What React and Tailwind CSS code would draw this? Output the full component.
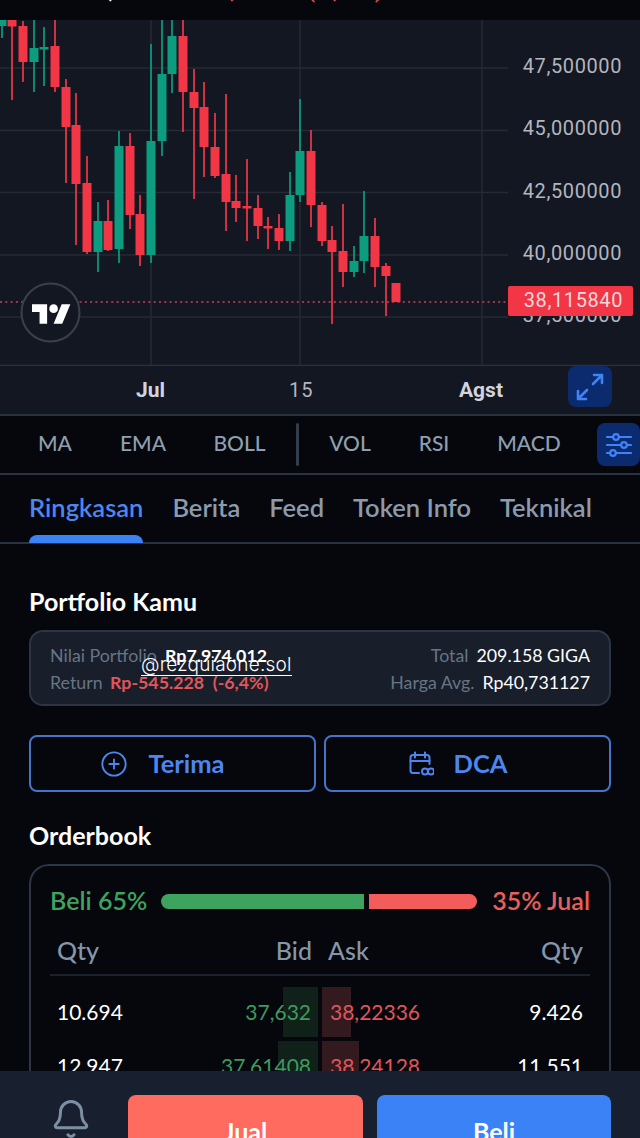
import React from "react";
import { Bell, CirclePlus } from "lucide-react";

// [x, bodyTop, bodyBottom, wickTop, wickBottom, up]
const candles = [
  [2, 20, 26, 20, 38, 1],
  [12, 20, 26.5, 20, 100, 0],
  [23, 26, 62, 21, 82, 0],
  [34, 48, 62, 20, 92, 1],
  [44, 47, 49, 27, 86, 1],
  [55, 46, 87, 20, 92, 0],
  [66, 87, 127, 79, 183, 0],
  [76, 125, 184, 93, 245, 0],
  [87, 183, 252, 156, 254, 0],
  [98, 221, 252, 202, 272, 1],
  [108, 221, 250, 200, 251, 0],
  [119, 146, 249, 131, 263, 1],
  [130, 146, 215, 133, 229, 0],
  [140, 214, 255, 195, 266, 0],
  [151, 141, 255, 44, 263, 1],
  [162, 74, 141, 20, 156, 1],
  [172, 36, 74, 20, 93, 1],
  [183, 36, 92, 20, 132, 0],
  [194, 92, 108, 69, 199, 0],
  [204, 107, 147, 82, 177, 0],
  [215, 147, 176, 113, 178, 0],
  [226, 174, 202, 94, 231, 0],
  [236, 201, 208, 175, 222, 0],
  [247, 206, 207, 159, 241, 0],
  [258, 208, 226, 195, 239, 0],
  [268, 226, 228, 217, 249, 0],
  [279, 228, 241, 214, 250, 0],
  [290, 195, 241, 172, 251, 1],
  [300, 151, 195, 99, 202, 1],
  [311, 151, 205, 130, 227, 0],
  [322, 205, 241, 202, 246, 0],
  [332, 240, 252, 226, 324, 0],
  [343, 251, 272, 204, 287, 0],
  [354, 261, 272, 246, 277, 1],
  [364, 236, 261, 191, 273, 1],
  [375, 236, 267, 218, 287, 0],
  [386, 266, 276, 263, 316, 0],
  [396, 283, 302, 283, 302, 0],
];

const gridRows = [68, 130.5, 192.5, 255, 317];
const gridCols = [151, 300, 482];

const priceLabels = [
  { text: "47,500000", cls: "top-[34px]" },
  { text: "45,000000", cls: "top-[96px]" },
  { text: "42,500000", cls: "top-[159px]" },
  { text: "40,000000", cls: "top-[221px]" },
  { text: "37,500000", cls: "top-[283px]" },
];

const indicatorsLeft = [
  { text: "MA", cls: "w-[33px] ml-[38px]" },
  { text: "EMA", cls: "w-[46px] ml-[49px]" },
  { text: "BOLL", cls: "w-[53px] ml-[47px]" },
];
const indicatorsRight = [
  { text: "VOL", cls: "w-[42px] ml-[30px]" },
  { text: "RSI", cls: "w-[32px] ml-[47px]" },
  { text: "MACD", cls: "w-[64px] ml-[47px]" },
];

const tabs = ["Ringkasan", "Berita", "Feed", "Token Info", "Teknikal"];

const orders = [
  {
    qty: "10.694",
    bid: "37,632",
    ask: "38,22336",
    qty2: "9.426",
    bidBar: "w-[35px]",
    askBar: "w-[29px]",
  },
  {
    qty: "12.947",
    bid: "37,61408",
    ask: "38,24128",
    qty2: "11.551",
    bidBar: "w-[40px]",
    askBar: "w-[37px]",
  },
];

const CandleChart = () => (
  <svg width="640" height="346" viewBox="0 20 640 346" className="block">
    {gridRows.map((y) => (
      <line key={y} x1="0" x2="508" y1={y} y2={y} stroke="#252a35" strokeWidth="1.5" />
    ))}
    {gridCols.map((x) => (
      <line key={x} x1={x} x2={x} y1="20" y2="365" stroke="#252a35" strokeWidth="1.5" />
    ))}
    <line x1="0" x2="508" y1="302" y2="302" stroke="#d2405a" strokeWidth="1.5" strokeDasharray="2 3.3" />
    {candles.map(([x, top, bottom, wickTop, wickBottom, up]) => (
      <g key={x} fill={up ? "#0c9c80" : "#f23645"} stroke="none">
        <rect x={x - 1} y={wickTop} width="2" height={wickBottom - wickTop} opacity="0.85" />
        <rect x={x - 4.5} y={top} width="9" height={Math.max(bottom - top, 2.5)} />
      </g>
    ))}
    <circle cx="50.5" cy="312.5" r="29" fill="#131722" stroke="#3c404b" strokeWidth="2" />
    <g transform="translate(32 300) scale(1.08)" fill="#fff">
      <path d="M14 22H7V11H0V4h14v18zM28 22h-8l7.5-18h8L28 22z" />
      <circle cx="20" cy="8" r="4" />
    </g>
    <line x1="0" x2="640" y1="365.5" y2="365.5" stroke="#2a303c" strokeWidth="1.5" />
  </svg>
);

const CalendarInfinity = () => (
  <svg width="26" height="26" viewBox="0 0 26 26" fill="none" stroke="currentColor" strokeWidth="2" strokeLinecap="round" strokeLinejoin="round">
    <path d="M11 22H5a2.5 2.5 0 0 1-2.5-2.5V6.5A2.5 2.5 0 0 1 5 4h14a2.5 2.5 0 0 1 2.5 2.5V13" />
    <path d="M7 1.5v5M17 1.5v5M2.5 10h19" />
    <circle cx="17" cy="20.5" r="3" />
    <circle cx="23" cy="20.5" r="3" />
  </svg>
);

const App = () => {
  return (
    <div className="flex flex-col h-[1138px] w-[640px] overflow-hidden bg-[#05070d] font-[family-name:Lato]">
      <main className="flex-1 min-h-0 overflow-hidden">
        <div className="h-5 overflow-hidden flex items-end pl-[86px] pb-[19px] font-[family-name:Roboto] text-xl leading-none font-medium">
          <span className="text-white shrink-0 w-[133px] whitespace-nowrap">38,11584 ↑</span>
          <span className="text-[#e2555a] shrink-0 whitespace-nowrap">6,684665 (-1,66%)</span>
        </div>

        <div className="relative h-[346px] bg-[#131722] font-[family-name:Roboto]">
          <CandleChart />
          {priceLabels.map((label) => (
            <span
              key={label.text}
              className={`absolute right-[18px] text-[20px] leading-6 tracking-[0.6px] text-[#b2b5be] ${label.cls}`}
            >
              {label.text}
            </span>
          ))}
          <span className="absolute left-[508px] top-[266px] w-[125px] h-[30px] rounded-[2px] bg-[#f23645] text-[#f3d9dc] text-[20px] leading-[29px] tracking-[0.6px] text-right pr-[10px]">
            38,115840
          </span>
        </div>

        <div className="relative flex items-start h-[50px] bg-[#131722] border-b-2 border-[#2a3140] font-[family-name:Roboto] text-[21px] text-[#d1d4dc]">
          <span className="absolute left-[136px] top-[12px] font-bold leading-6">Jul</span>
          <span className="absolute left-[289px] top-[12px] text-[20px] font-normal leading-6 tracking-[1px] text-[#b2b5be]">15</span>
          <span className="absolute left-[459px] top-[12px] font-bold leading-6">Agst</span>
          <button className="ml-[568px] w-[44px] h-[41px] rounded-lg bg-[#0c2a6e] flex items-center justify-center text-[#3f83f8]">
            <svg width="30" height="30" viewBox="0 0 30 30" fill="none" stroke="currentColor" strokeWidth="2.6" strokeLinecap="round" strokeLinejoin="round">
              <path d="M18 12l9-9M19 3h8v8M12 18l-9 9M3 19v8h8" />
            </svg>
          </button>
        </div>

        <div className="flex items-center h-[59px] border-b-2 border-[#2a3140] text-[21px] font-medium text-[#8f9faf]">
          {indicatorsLeft.map((item) => (
            <span key={item.text} className={`mb-[3px] text-center ${item.cls}`}>
              {item.text}
            </span>
          ))}
          <span className="ml-[30px] w-[3px] h-[43px] rounded-sm bg-[#333d4c]" />
          {indicatorsRight.map((item) => (
            <span key={item.text} className={`mb-[3px] text-center ${item.cls}`}>
              {item.text}
            </span>
          ))}
          <button className="ml-auto w-[43px] h-[43px] rounded-lg bg-[#0c2a6e] flex items-center justify-center text-[#3f83f8]">
            <svg width="28" height="28" viewBox="0 0 28 28" fill="none" stroke="currentColor" strokeWidth="2.2" strokeLinecap="round">
              <path d="M2 6h6M14 6h12M2 14h14M22 14h4M2 22h3M11 22h15" />
              <circle cx="11" cy="6" r="2.8" />
              <circle cx="19" cy="14" r="2.8" />
              <circle cx="8" cy="22" r="2.8" />
            </svg>
          </button>
        </div>

        <div className="flex gap-[29px] h-[69px] pl-[29px] border-b-2 border-[#2a3140] text-[25.5px] font-semibold text-[#8c9bab]">
          {tabs.map((tab, idx) => (
            <div key={tab} className="relative flex items-start pt-[13px] h-[68px]">
              <span className={idx === 0 ? "text-[#4d86ee] leading-[38px]" : "leading-[38px]"}>{tab}</span>
              {idx === 0 && <span className="absolute left-0 right-0 bottom-0 h-[8px] rounded-t-lg bg-[#3b82f6]" />}
            </div>
          ))}
        </div>

        <div className="px-[29px] pt-[42px]">
          <h2 className="text-[25px] leading-[30px] font-bold text-white">Portfolio Kamu</h2>

          <div className="relative mt-[14px] h-[76px] rounded-[14px] border-2 border-[#2c3543] bg-[#181e2a] flex justify-between items-start pt-[10px] px-[19px] text-[17.8px] leading-[27px]">
            <div>
              <div className="flex">
                <span className="w-[115px] text-[#667586]">Nilai Portfolio</span>
                <span className="font-bold text-white">Rp7.974.012</span>
              </div>
              <div className="flex">
                <span className="w-[60px] text-[#667586]">Return</span>
                <span className="font-bold text-[#e0565a]">Rp-545.228 &nbsp;(-6,4%)</span>
              </div>
            </div>
            <div className="text-right">
              <div>
                <span className="text-[#667586]">Total</span>
                <span className="ml-2 text-white">209.158 GIGA</span>
              </div>
              <div>
                <span className="text-[#667586]">Harga Avg.</span>
                <span className="ml-2 text-white">Rp40,731127</span>
              </div>
            </div>
            <span className="absolute left-[110px] top-[23px] text-[19px] leading-[20px] tracking-[0.2px] border-b-[1.5px] border-white text-white font-[family-name:Inter] font-light">
              @rezquiaone.sol
            </span>
          </div>

          <div className="mt-[29px] grid grid-cols-2 gap-2">
            <button className="h-[57px] pr-[20px] rounded-lg border-2 border-[#4674c8] flex items-center justify-center gap-[20px] text-[25.5px] font-bold text-[#4d86ee]">
              <CirclePlus size={28} strokeWidth={1.6} />
              Terima
            </button>
            <button className="h-[57px] pr-[20px] rounded-lg border-2 border-[#4674c8] flex items-center justify-center gap-[20px] text-[25.5px] font-bold text-[#4d86ee]">
              <CalendarInfinity />
              DCA
            </button>
          </div>

          <h2 className="mt-[28px] text-[25px] leading-[30px] font-bold text-white">Orderbook</h2>

          <div className="mt-[14px] rounded-t-[20px] border-2 border-b-0 border-[#2b3646] h-[300px] px-[19px] pt-[17px]">
            <div className="flex items-center h-[36px] text-[25px] font-semibold">
              <span className="text-[#3ea35f] w-[111px]">Beli 65%</span>
              <span className="w-[203px] h-[15px] rounded-l-full bg-[#3ea35f]" />
              <span className="ml-[5px] w-[108px] h-[15px] rounded-r-full bg-[#f25c5a]" />
              <span className="ml-auto text-[#e8605c]">35% Jual</span>
            </div>

            <div className="mt-[9px] flex items-center h-[48px] px-[7px] border-b-2 border-[#1a212c] text-[25px] font-medium text-[#8496aa]">
              <span className="w-[100px]">Qty</span>
              <span className="w-[155px] text-right">Bid</span>
              <span className="ml-[16px]">Ask</span>
              <span className="ml-auto">Qty</span>
            </div>

            <div className="mt-[11px] flex flex-col gap-[4px] text-[21px]">
              {orders.map((row) => (
                <div key={row.qty} className="relative flex items-center h-[50px] px-[7px]">
                  <span className="w-[100px] text-white">{row.qty}</span>
                  <div className="relative w-[161px] h-full flex items-center justify-end pr-[7px]">
                    <span className={`absolute right-0 top-0 bottom-0 bg-[#0f2119] ${row.bidBar}`} />
                    <span className="relative text-[#3f9a5f]">{row.bid}</span>
                  </div>
                  <div className="relative ml-[4px] h-full flex items-center pl-[8px]">
                    <span className={`absolute left-0 top-0 bottom-0 bg-[#331a1f] ${row.askBar}`} />
                    <span className="relative text-[#e0565a]">{row.ask}</span>
                  </div>
                  <span className="ml-auto text-white">{row.qty2}</span>
                </div>
              ))}
            </div>
          </div>
        </div>
      </main>

      <footer className="shrink-0 h-[67px] overflow-hidden bg-[#182030] flex items-start gap-[14px] pt-[24px] pl-[128px] pr-[29px] relative">
        <Bell size={42} strokeWidth={1.7} className="absolute left-[50px] top-[27px] text-[#7d8fa3]" />
        <button className="w-[235px] h-[74px] shrink-0 rounded-lg bg-[#ff6b5e] text-white text-[25px] font-bold">Jual</button>
        <button className="w-[234px] h-[74px] shrink-0 rounded-lg bg-[#3b82f6] text-white text-[25px] font-bold">Beli</button>
      </footer>
    </div>
  );
};

export default App;
